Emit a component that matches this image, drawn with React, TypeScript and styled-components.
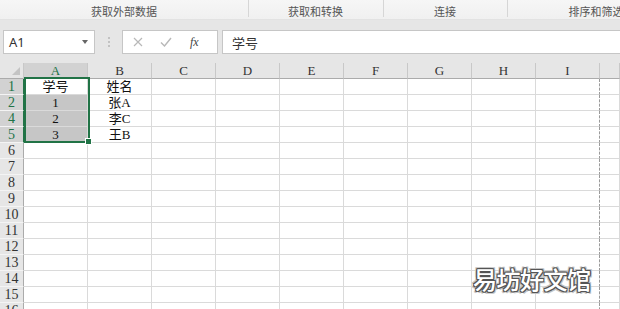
import React from 'react';
import styled, {createGlobalStyle} from 'styled-components';

const GlobalStyle = createGlobalStyle`
  html, body {
    margin: 0;
    padding: 0;
    background: #e6e6e6;
  }
  body {
    width: 620px;
    height: 309px;
    overflow: hidden;
  }
`;

const sansCJK = `"Noto Sans CJK SC", "Noto Sans", sans-serif`;
const serifCJK = `"Liberation Serif", "Noto Sans CJK SC", serif`;
const green = '#217346';

const Page = styled.div`
  position: relative;
  width: 620px;
  height: 309px;
  overflow: hidden;
  display: flex;
  flex-direction: column;
`;

const Ribbon = styled.div`
  height: 20px;
  display: flex;
  background: linear-gradient(#f6f6f6, #f0f0f0);
  border-bottom: 1px solid #e2e2e2;
  box-sizing: border-box;
  flex-shrink: 0;
`;

const Group = styled.div<{ $w: number; $first?: boolean }>`
  width: ${p => p.$w}px;
  flex-shrink: 0;
  display: flex;
  align-items: center;
  justify-content: center;
  font-family: ${sansCJK};
  font-size: 11px;
  color: #555;
  padding-top: 3px;
  box-sizing: border-box;
  position: relative;
  white-space: nowrap;

  &::before {
    content: '';
    display: ${p => (p.$first ? 'none' : 'block')};
    position: absolute;
    left: 0;
    top: 0;
    height: 17px;
    width: 1px;
    background: #d6d6d6;
  }
`;

const FormulaBar = styled.div`
  height: 43px;
  flex-shrink: 0;
  display: flex;
  align-items: flex-start;
  padding: 10px 0 0 3px;
  box-sizing: border-box;
  background: #e6e6e6;
`;

const NameBox = styled.div`
  width: 92px;
  height: 24px;
  box-sizing: border-box;
  background: #fff;
  border: 1px solid #c6c6c6;
  display: flex;
  align-items: center;
  justify-content: space-between;
  padding: 0 6px 0 5px;
  font-family: "Noto Sans", sans-serif;
  font-size: 13px;
  color: #333;
`;

const Caret = styled.span`
  width: 0;
  height: 0;
  border-left: 3px solid transparent;
  border-right: 3px solid transparent;
  border-top: 4px solid #666;
`;

const Dots = styled.div`
  width: 27px;
  height: 24px;
  display: flex;
  flex-direction: column;
  align-items: center;
  justify-content: center;
  gap: 2px;

  > i {
    width: 2px;
    height: 2px;
    background: #c2c2c2;
  }
`;

const IconBox = styled.div`
  width: 96px;
  height: 24px;
  box-sizing: border-box;
  background: #fff;
  border: 1px solid #c6c6c6;
  display: flex;
  align-items: center;
  padding-left: 10px;
  gap: 17px;
`;

const Fx = styled.span`
  font-family: "Liberation Serif", serif;
  font-style: italic;
  font-size: 12px;
  color: #444;
  margin-left: 1px;
`;

const FormulaInput = styled.div`
  flex: 1;
  margin-left: 4px;
  height: 24px;
  box-sizing: border-box;
  background: #fff;
  border: 1px solid #c6c6c6;
  border-right: none;
  display: flex;
  align-items: center;
  padding-left: 9px;
  font-family: ${sansCJK};
  font-size: 13px;
  color: #333;
`;

const Sheet = styled.div`
  position: relative;
  flex: 1;
  background: #fff;
  display: flex;
  flex-direction: column;
`;

const Row = styled.div`
  display: flex;
  height: 16px;
  flex-shrink: 0;
`;

const Corner = styled.div`
  width: 24px;
  height: 16px;
  flex-shrink: 0;
  box-sizing: border-box;
  background: #e6e6e6;
  border-right: 1px solid #c8c8c8;
  border-bottom: 1px solid #ababab;
  position: relative;

  &::after {
    content: '';
    position: absolute;
    right: 3px;
    bottom: 3px;
    border-left: 8px solid transparent;
    border-bottom: 8px solid #c4c4c4;
  }
`;

const ColHead = styled.div<{ $sel?: boolean; $w?: number; $grow?: boolean }>`
  width: ${p => (p.$w ?? 64)}px;
  flex: ${p => (p.$grow ? 1 : '0 0 auto')};
  box-sizing: border-box;
  background: ${p => (p.$sel ? '#d2d2d2' : '#e6e6e6')};
  border-right: 1px solid #c8c8c8;
  border-bottom: 1px solid ${p => (p.$sel ? green : '#ababab')};
  display: flex;
  align-items: center;
  justify-content: center;
  font-family: ${serifCJK};
  font-size: 13px;
  color: ${p => (p.$sel ? green : '#333')};
`;

const RowHead = styled.div<{ $sel?: boolean }>`
  width: 24px;
  flex-shrink: 0;
  box-sizing: border-box;
  background: ${p => (p.$sel ? '#d2d2d2' : '#e6e6e6')};
  border-right: 1px solid ${p => (p.$sel ? green : '#ababab')};
  border-bottom: 1px solid #f4f4f4;
  display: flex;
  align-items: center;
  justify-content: center;
  font-family: ${serifCJK};
  font-size: 14px;
  color: ${p => (p.$sel ? green : '#333')};
`;

const Cell = styled.div<{ $fill?: boolean; $dashed?: boolean; $grow?: boolean }>`
  width: 64px;
  flex: ${p => (p.$grow ? 1 : '0 0 auto')};
  box-sizing: border-box;
  background: ${p => (p.$fill ? '#c6c6c6' : '#fff')};
  border-right: 1px ${p => (p.$dashed ? 'dashed #9a9a9a' : 'solid #dadada')};
  border-bottom: 1px solid #dadada;
  display: flex;
  align-items: center;
  justify-content: center;
  font-family: ${serifCJK};
  font-size: 13px;
  color: #111;
  line-height: 1;
`;

const Selection = styled.div`
  position: absolute;
  left: 24px;
  top: 14px;
  width: 66px;
  height: 66px;
  box-sizing: border-box;
  border: 2px solid ${green};
  pointer-events: none;

  &::after {
    content: '';
    position: absolute;
    right: -4px;
    bottom: -4px;
    width: 5px;
    height: 5px;
    background: ${green};
    border: 1px solid #fff;
  }
`;

const Watermark = styled.div`
  position: absolute;
  left: 473px;
  top: 261px;
  font-family: ${sansCJK};
  font-weight: 500;
  font-size: 24px;
  letter-spacing: -0.5px;
  color: #fff;
  text-shadow:
    1px 0 0 #555, -1px 0 0 #555, 0 1px 0 #555, 0 -1px 0 #555,
    1px 1px 0 #555, -1px -1px 0 #555, 1px -1px 0 #555, -1px 1px 0 #555,
    2px 2px 0 #c4c4c4, -2px 2px 0 #c4c4c4, 2px -2px 0 #c4c4c4, -2px -2px 0 #c4c4c4;
  pointer-events: none;
`;

const columns = ['A', 'B', 'C', 'D', 'E', 'F', 'G', 'H', 'I'];
const rows = ['1', '2', '4', '5', '6', '7', '8', '9', '10', '11', '12', '13', '14', '15', '16'];
const data: Record<string, [string, string]> = {
    '1': ['学号', '姓名'],
    '2': ['1', '张A'],
    '4': ['2', '李C'],
    '5': ['3', '王B'],
};
const selectedRows = ['1', '2', '4', '5'];

const App: React.FC = () => {
    return (
        <Page>
            <GlobalStyle/>
            <Ribbon>
                <Group $w={248} $first>获取外部数据</Group>
                <Group $w={135}>获取和转换</Group>
                <Group $w={124}>连接</Group>
                <Group $w={178}>排序和筛选</Group>
            </Ribbon>
            <FormulaBar>
                <NameBox>A1<Caret/></NameBox>
                <Dots><i/><i/><i/></Dots>
                <IconBox>
                    <svg width="10" height="10" viewBox="0 0 10 10">
                        <path d="M1 1 L9 9 M9 1 L1 9" stroke="#b8b8b8" strokeWidth="1.2"/>
                    </svg>
                    <svg width="12" height="10" viewBox="0 0 12 10">
                        <path d="M1 5.5 L4.5 9 L11 1" stroke="#b8b8b8" strokeWidth="1.4" fill="none"/>
                    </svg>
                    <Fx>fx</Fx>
                </IconBox>
                <FormulaInput>学号</FormulaInput>
            </FormulaBar>
            <Sheet>
                <Row>
                    <Corner/>
                    {columns.map(c => <ColHead key={c} $sel={c === 'A'}>{c}</ColHead>)}
                    <ColHead $grow/>
                </Row>
                {rows.map(r => {
                    const vals = data[r];
                    const sel = selectedRows.includes(r);
                    return (
                        <Row key={r}>
                            <RowHead $sel={sel}>{r}</RowHead>
                            {columns.map((c, i) => (
                                <Cell key={c} $fill={c === 'A' && sel && r !== '1'} $dashed={c === 'I'}>
                                    {vals && i < 2 ? vals[i] : ''}
                                </Cell>
                            ))}
                            <Cell $grow/>
                        </Row>
                    );
                })}
                <Selection/>
            </Sheet>
            <Watermark>易坊好文馆</Watermark>
        </Page>
    );
};

export default App;
